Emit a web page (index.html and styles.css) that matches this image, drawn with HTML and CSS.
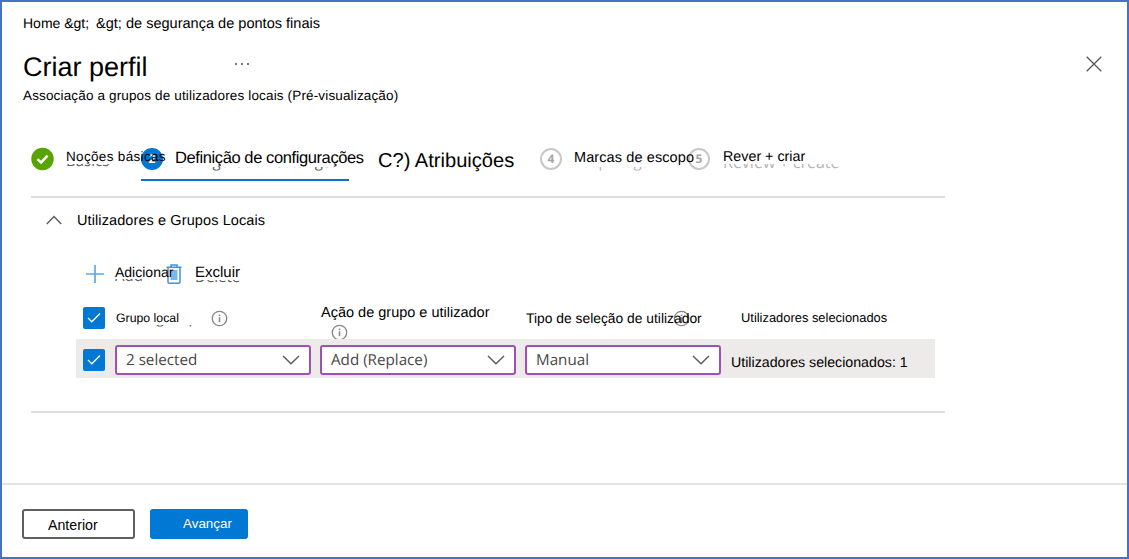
FILE: index.html
```
<!DOCTYPE html>
<html lang="pt">
<head>
  <meta charset="UTF-8">
  <meta name="viewport" content="width=device-width, initial-scale=1.0">
  <title>Criar perfil</title>
  <link rel="stylesheet" href="styles.css">
</head>
<body>
  <div class="page">
    <nav class="breadcrumb">
      <span class="crumb-home">Home &amp;gt;</span>
      <span class="crumb-current">&amp;gt; de segurança de pontos finais</span>
    </nav>

    <header class="header">
      <h1>Criar perfil</h1>
      <svg class="more" width="16" height="4" viewBox="0 0 16 4"><path d="M0 1h2v2H0zM6 1h2v2H6zM12 1h2v2h-2z" fill="#777"/></svg>
      <svg class="close" width="16" height="16" viewBox="0 0 16 16"><path d="M.7.7l14.600 14.600M15.300.7L.7 15.300" stroke="#555" stroke-width="1.300"/></svg>
    </header>
    <p class="subtitle">Associação a grupos de utilizadores locais (Pré-visualização)</p>

    <div class="steps">
      <div class="step step-basics">
        <svg width="24" height="24" viewBox="0 0 24 24"><circle cx="11.500" cy="12" r="11.200" fill="#57a300"/><path d="M6.500 12.200l3.600 3.400 6.500-7" fill="none" stroke="#fff" stroke-width="2.500"/></svg>
        <span class="label">Noções básicas<span class="ghost" aria-hidden="true">Basics</span></span>
      </div>
      <div class="step step-config">
        <span class="circle active">2</span>
        <span class="label">Definição de configurações<span class="ghost" aria-hidden="true">Configuration settings</span></span>
      </div>
      <div class="step step-assign"><span class="label">C?) Atribuições</span></div>
      <div class="step step-scope">
        <span class="circle">4</span>
        <span class="label">Marcas de escopo<span class="ghost" aria-hidden="true">Scope tags</span></span>
      </div>
      <div class="step step-review">
        <span class="circle">5</span>
        <span class="label">Rever + criar<span class="ghost" aria-hidden="true">Review + create</span></span>
      </div>
    </div>

    <section class="section">
      <div class="section-title">
        <svg width="16" height="10" viewBox="0 0 16 10"><path d="M.8 9L8 1.500 15.200 9" fill="none" stroke="#605e5c" stroke-width="1.500"/></svg>
        <span>Utilizadores e Grupos Locais</span>
      </div>

      <div class="toolbar">
        <svg class="plus" width="20" height="20" viewBox="0 0 20 20"><path d="M10 1v18M1 10h18" stroke="#5ba9e6" stroke-width="1.700"/></svg>
        <span class="tool-add">Adicionar<span class="ghost" aria-hidden="true">Add</span></span>
        <svg class="trash" width="16" height="20" viewBox="0 0 16 20"><path d="M5 2.500V1h6v1.500M.5 3.200h15M2 3.500V18q0 1.200 1.200 1.200h9.600q1.200 0 1.200-1.200V3.500" fill="none" stroke="#3a96dd" stroke-width="1.500"/><path d="M4.500 6h7v10h-7z" fill="#7bb9ea"/></svg>
        <span class="tool-delete">Excluir<span class="ghost" aria-hidden="true">Delete</span></span>
      </div>

      <div class="row row-head">
        <span class="check"><svg width="16" height="12" viewBox="0 0 16 12"><path d="M2 6l3.800 3.800L14 1.500" fill="none" stroke="#fff" stroke-width="1.300"/></svg></span>
        <div class="col col-group">
          <span>Grupo local<span class="ghost" aria-hidden="true">Local group</span></span>
          <svg class="info" width="17" height="17" viewBox="0 0 17 17"><circle cx="8.500" cy="8.500" r="7.200" fill="none" stroke="#858585" stroke-width="1.300"/><path d="M8.500 7.300v5M8.500 4.400v1.600" stroke="#858585" stroke-width="1.500"/></svg>
        </div>
        <div class="col col-action">
          <span>Ação de grupo e utilizador</span>
          <svg class="info" width="17" height="17" viewBox="0 0 17 17"><circle cx="8.500" cy="8.500" r="7.200" fill="none" stroke="#858585" stroke-width="1.300"/><path d="M8.500 7.300v5M8.500 4.400v1.600" stroke="#858585" stroke-width="1.500"/></svg>
        </div>
        <div class="col col-type">
          <svg class="info" width="17" height="17" viewBox="0 0 17 17"><circle cx="8.500" cy="8.500" r="7.200" fill="none" stroke="#858585" stroke-width="1.300"/><path d="M8.500 7.300v5M8.500 4.400v1.600" stroke="#858585" stroke-width="1.500"/></svg>
          <span>Tipo de seleção de utilizador</span>
        </div>
        <div class="col col-users"><span>Utilizadores selecionados</span></div>
      </div>

      <div class="row row-data">
        <span class="check"><svg width="16" height="12" viewBox="0 0 16 12"><path d="M2 6l3.800 3.800L14 1.500" fill="none" stroke="#fff" stroke-width="1.300"/></svg></span>
        <div class="dropdown"><span>2 selected</span><svg width="18" height="10" viewBox="0 0 18 10"><path d="M1 1l8 7.800L17 1" fill="none" stroke="#605e5c" stroke-width="1.500"/></svg></div>
        <div class="dropdown"><span>Add (Replace)</span><svg width="18" height="10" viewBox="0 0 18 10"><path d="M1 1l8 7.800L17 1" fill="none" stroke="#605e5c" stroke-width="1.500"/></svg></div>
        <div class="dropdown"><span>Manual</span><svg width="18" height="10" viewBox="0 0 18 10"><path d="M1 1l8 7.800L17 1" fill="none" stroke="#605e5c" stroke-width="1.500"/></svg></div>
        <span class="selected-users">Utilizadores selecionados: 1</span>
      </div>
    </section>

    <footer class="footer">
      <button class="btn btn-prev">Anterior</button>
      <button class="btn btn-next">Avançar</button>
    </footer>
  </div>
</body>
</html>
```
FILE: styles.css
```
* {
  box-sizing: border-box;
}

body {
  margin: 0;
  font-family: "Liberation Sans", Arial, sans-serif;
  font-size: 14px;
  line-height: 20px;
  color: #000;
  background: #fff;
  white-space: nowrap;
  text-rendering: geometricPrecision;
}

svg {
  display: block;
  flex: none;
}

.page {
  display: flex;
  flex-direction: column;
  width: 1129px;
  height: 559px;
  border: 2px solid #4472c4;
  overflow: hidden;
}

.breadcrumb {
  display: flex;
  height: 20px;
  margin: 11px 0 0 21px;
}

.crumb-home {
  width: 73px;
}

.crumb-current {
  padding-top: 1px;
  font-size: 14.55px;
}

.header {
  display: flex;
  align-items: flex-start;
  height: 40px;
  margin: 16px 25px 0 21px;
}

h1 {
  width: 212px;
  margin: 0;
  font-size: 27px;
  font-weight: normal;
  line-height: 36px;
}

.more {
  margin-top: 13px;
}

.close {
  margin: 7px 0 0 auto;
}

.subtitle {
  margin: -3px 0 0 21px;
  font-size: 13.5px;
  letter-spacing: 0.15px;
}

.steps {
  display: flex;
  height: 36px;
  margin: 39px 0 0 29px;
  padding-top: 6px;
}

.step {
  display: flex;
  align-items: flex-start;
  height: 100%;
}

.label {
  position: relative;
}

.circle {
  flex: none;
  width: 22px;
  height: 22px;
  margin-top: -3px;
  border: 2px solid #c8c8c8;
  border-radius: 50%;
  color: #a6a6a6;
  font: bold 12px/18px "Open Sans", sans-serif;
  text-align: center;
}

.circle.active {
  border-color: #0078d4;
  background: #0078d4;
  color: #fff;
}

/* lower edge of the text lying under the label */
.ghost {
  position: absolute;
  left: 0;
  top: 0;
  font-family: "Open Sans", sans-serif;
  font-size: 15px;
  letter-spacing: 0;
  color: #605e5c;
}

.step-basics {
  width: 110px;
}

.step-basics svg {
  margin-top: -4px;
}

.step-basics .label {
  z-index: 1;
  margin: -4px 0 0 11px;
  font-size: 13.5px;
  letter-spacing: 0.33px;
}

.step-basics .ghost {
  top: 4px;
  clip-path: inset(13px 0 0 0);
}

.step-config {
  width: 208px;
  border-bottom: 2px solid #0f6fce;
}

.step-config .label {
  margin: -3px 0 0 12px;
  font-size: 16.5px;
  letter-spacing: -0.4px;
}

.step-config .ghost {
  top: 4px;
  left: 1px;
  clip-path: inset(15px 0 0 0);
}

.step-assign {
  width: 191px;
  padding-left: 29px;
  font-size: 20.1px;
}

.step-scope {
  width: 148px;
}

.step-scope .label {
  margin: -3px 0 0 12px;
  font-size: 14.5px;
  letter-spacing: 0.1px;
}

.step-scope .ghost,
.step-review .ghost {
  top: 4px;
  color: #b5b5b5;
  clip-path: inset(15px 0 0 0);
}

.step-review .label {
  margin: -4px 0 0 13px;
  font-size: 14.3px;
}

.step-review .ghost {
  top: 5px;
  font-size: 16px;
  clip-path: inset(12px 0 0 0);
}

.section {
  width: 914px;
  height: 217px;
  margin: 15px 0 0 29px;
  border-top: 2px solid #dedede;
  border-bottom: 2px solid #dedede;
}

.section-title {
  display: flex;
  align-items: center;
  gap: 15px;
  height: 20px;
  margin: 13px 0 0 15px;
  font-size: 14.5px;
  letter-spacing: 0.1px;
}

.section-title svg {
  margin-top: -2px;
}

.toolbar {
  display: flex;
  height: 22px;
  margin: 33px 0 0 54px;
}

.tool-add,
.tool-delete {
  position: relative;
}

.tool-add {
  z-index: 1;
  width: 51px;
  margin: -2px 0 0 10px;
}

.tool-delete {
  margin: -1px 0 0 13px;
  font-size: 15px;
}

.toolbar .ghost {
  top: 4px;
  clip-path: inset(13px 0 0 0);
}

.row {
  display: flex;
  width: 859px;
  margin-left: 45px;
  padding-left: 7px;
}

.check {
  display: flex;
  flex: none;
  align-items: center;
  justify-content: center;
  width: 22px;
  height: 22px;
  border-radius: 2px;
  background: #0078d4;
}

.row-head {
  height: 32px;
  margin-top: 21px;
  overflow: hidden;
}

.col {
  display: flex;
  flex: none;
  align-items: flex-start;
}

.col-group {
  position: relative;
  width: 205px;
  margin-left: 11px;
  font-size: 12.3px;
}

.col-group > span {
  width: 95px;
  padding-top: 1px;
}

.col-group .ghost {
  top: 1px;
  clip-path: inset(17px 0 0 0);
}

.col-group .info {
  margin-top: 3px;
}

.col-action {
  flex-direction: column;
  width: 205px;
  margin-top: -4px;
  font-size: 14.5px;
}

.col-action .info {
  margin: 1px 0 0 10px;
}

.col-type {
  position: relative;
  width: 215px;
  padding-top: 1px;
  font-size: 13.85px;
}

.col-type .info {
  position: absolute;
  left: 147px;
  top: 3px;
}

.col-type span {
  position: relative;
}

.col-users {
  padding-top: 1px;
  font-size: 12.9px;
}

.row-data {
  align-items: center;
  gap: 9px;
  height: 39px;
  background: #edebe9;
}

.row-data .check {
  margin: 2px 1px 0 0;
}

.dropdown {
  display: flex;
  align-items: center;
  justify-content: space-between;
  width: 196px;
  height: 30px;
  margin-top: 2px;
  padding: 0 9px 0 9px;
  border: 2px solid #a14fb5;
  border-radius: 3px;
  background: #fff;
  color: #484644;
  font-family: "Open Sans", "Noto Sans", sans-serif;
  font-size: 15.2px;
}

.dropdown span {
  padding-top: 1px;
}

.selected-users {
  margin: 8px 0 0 1px;
  font-size: 14.2px;
}

.footer {
  display: flex;
  gap: 15px;
  flex: 1;
  margin-top: 70px;
  padding: 24px 0 0 20px;
  border-top: 2px solid #e3e3e3;
}

.btn {
  height: 30px;
  border: 2px solid #605e5c;
  border-radius: 3px;
  background: #fff;
  color: #000;
  font-family: inherit;
  font-size: 14.2px;
  text-align: left;
}

.btn-prev {
  width: 113px;
  padding: 2px 0 0 24px;
}

.btn-next {
  width: 98px;
  padding: 0 0 1px 31px;
  border-color: #0078d4;
  background: #0078d4;
  color: #fff;
  font-size: 13.4px;
}
```
